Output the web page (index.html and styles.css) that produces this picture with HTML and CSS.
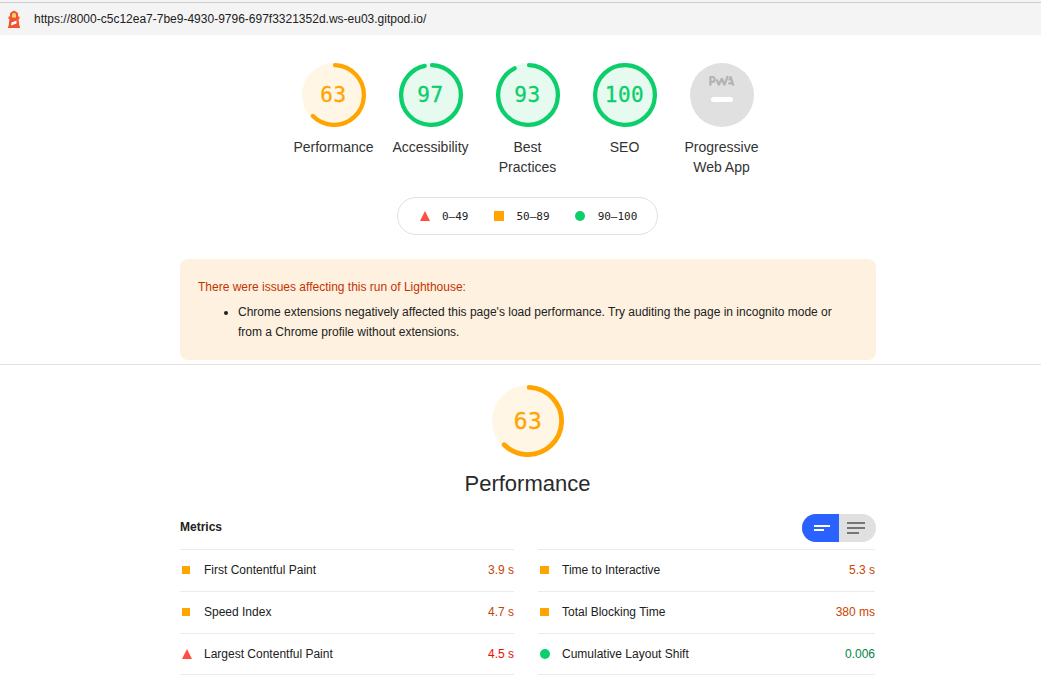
FILE: index.html
```html
<!DOCTYPE html>
<html lang="en">
<head>
<meta charset="utf-8">
<title>Lighthouse Report</title>
<link rel="stylesheet" href="styles.css">
</head>
<body>
<header class="topbar">
  <svg class="topbar-logo" width="14" height="19" viewBox="0 0 14 19">
    <path fill="#f4522d" d="M7 .5 11 3v3.500h1.500V9H11.500l1 7.500h.5V18H1v-1.500h.500l1-7.500H1.500V6.500H3V3z"/>
    <path fill="#ffd874" d="M5 7.500V5a2 2 0 0 1 4 0v2.500z"/>
    <path fill="#fff" d="m4.500 12.500 5-2v3L4 15.500z"/>
  </svg>
  <span class="topbar-url">https://8000-c5c12ea7-7be9-4930-9796-697f3321352d.ws-eu03.gitpod.io/</span>
</header>
<main>
  <section class="scores">
    <div class="gauge average">
      <div class="dial"><svg viewBox="0 0 120 120"><circle class="base" cx="60" cy="60" r="60"/><circle class="arc" cx="60" cy="60" r="56" stroke-dasharray="217.700 352"/></svg><span class="value">63</span></div>
      <div class="label">Performance</div>
    </div>
    <div class="gauge pass">
      <div class="dial"><svg viewBox="0 0 120 120"><circle class="base" cx="60" cy="60" r="60"/><circle class="arc" cx="60" cy="60" r="56" stroke-dasharray="337.300 352"/></svg><span class="value">97</span></div>
      <div class="label">Accessibility</div>
    </div>
    <div class="gauge pass">
      <div class="dial"><svg viewBox="0 0 120 120"><circle class="base" cx="60" cy="60" r="60"/><circle class="arc" cx="60" cy="60" r="56" stroke-dasharray="323.200 352"/></svg><span class="value">93</span></div>
      <div class="label">Best Practices</div>
    </div>
    <div class="gauge pass">
      <div class="dial"><svg viewBox="0 0 120 120"><circle class="base" cx="60" cy="60" r="60"/><circle class="arc" cx="60" cy="60" r="56" stroke-dasharray="352 352"/></svg><span class="value">100</span></div>
      <div class="label">SEO</div>
    </div>
    <div class="gauge">
      <div class="dial"><svg viewBox="0 0 64 64">
        <circle cx="32" cy="32" r="32" fill="#e0e0e0"/>
        <g fill="none" stroke="#b3b3b3" stroke-width="2.200" stroke-linejoin="bevel">
          <path d="M20.400 22.700V14h2q2.300 0 2.300 2.400T22.400 18.800H20.400"/>
          <path d="M26.700 16.500 28.800 22 31.800 15.500 34.400 22 37.800 13"/>
          <path d="M39.300 17.500 40.600 13.500 43.400 22.700M38.200 20.300h4"/>
        </g>
        <rect x="21" y="34" width="22" height="5" rx="2.500" fill="#fff"/>
      </svg></div>
      <div class="label">Progressive Web App</div>
    </div>
  </section>
  <div class="scale">
    <span class="range"><svg class="mark" viewBox="0 0 10 10"><path fill="#ff4e42" d="M5 0l5 10H0z"/></svg><span class="range-text">0–49</span></span>
    <span class="range"><svg class="mark" viewBox="0 0 10 10"><path fill="#ffa400" d="M0 0h10v10H0z"/></svg><span class="range-text">50–89</span></span>
    <span class="range"><svg class="mark" viewBox="0 0 10 10"><circle fill="#0cce6b" cx="5" cy="5" r="5"/></svg><span class="range-text">90–100</span></span>
  </div>
  <section class="warning">
    <p>There were issues affecting this run of Lighthouse:</p>
    <ul><li>Chrome extensions negatively affected this page's load performance. Try auditing the page in incognito mode or from a Chrome profile without extensions.</li></ul>
  </section>
  <section class="category">
    <div class="gauge gauge-large average">
      <div class="dial"><svg viewBox="0 0 120 120"><circle class="base" cx="60" cy="60" r="60"/><circle class="arc" cx="60" cy="60" r="56" stroke-dasharray="217.700 352"/></svg><span class="value">63</span></div>
      <h1>Performance</h1>
    </div>
    <div class="metrics-head">
      <h2>Metrics</h2>
      <div class="toggle">
        <span class="toggle-on"><svg width="37" height="28"><path fill="#fff" d="M12 11h16v2H12zM12 15h10v2H12z"/></svg></span>
        <span><svg width="37" height="28"><path fill="#757575" d="M8 8h18v2H8zM8 13h18v2H8zM8 18h12v2H8z"/></svg></span>
      </div>
    </div>
    <div class="metrics">
      <div class="column">
        <div class="metric average"><svg class="icon" viewBox="0 0 10 10"><path d="M0 1h8v8H0z"/></svg><span class="name">First Contentful Paint</span><span class="time">3.9 s</span></div>
        <div class="metric average"><svg class="icon" viewBox="0 0 10 10"><path d="M0 1h8v8H0z"/></svg><span class="name">Speed Index</span><span class="time">4.7 s</span></div>
        <div class="metric fail"><svg class="icon" viewBox="0 0 10 10"><path d="M5 0l5 10H0z"/></svg><span class="name">Largest Contentful Paint</span><span class="time">4.5 s</span></div>
      </div>
      <div class="column">
        <div class="metric average"><svg class="icon" viewBox="0 0 10 10"><path d="M0 1h9v8H0z"/></svg><span class="name">Time to Interactive</span><span class="time">5.3 s</span></div>
        <div class="metric average"><svg class="icon" viewBox="0 0 10 10"><path d="M0 1h9v8H0z"/></svg><span class="name">Total Blocking Time</span><span class="time">380 ms</span></div>
        <div class="metric pass"><svg class="icon" viewBox="0 0 10 10"><circle cx="5" cy="5" r="5"/></svg><span class="name">Cumulative Layout Shift</span><span class="time">0.006</span></div>
      </div>
    </div>
  </section>
</main>
</body>
</html>
```
FILE: styles.css
```css
* { box-sizing: border-box; }
body {
  margin: 0;
  overflow: hidden;
  background: #fff;
  color: #212121;
  font: 12px/20px "Liberation Sans", Arial, sans-serif;
}
svg { display: block; }
p, ul, h1, h2 { margin: 0; }

.topbar {
  display: flex;
  align-items: center;
  height: 35px;
  padding: 2px 0 0 7px;
  border-top: 1px solid #f4f4f4;
  background: linear-gradient(#f4f4f4 1px, #cecece 1px, #cecece 2px, #f4f4f4 2px);
}
.topbar-logo { margin-right: 13px; }

.scores {
  display: flex;
  justify-content: center;
  width: 485px;
  margin: 28px auto 0 285px;
}
.gauge {
  display: flex;
  flex-direction: column;
  align-items: center;
  width: 97px;
  --size: 64px;
}
.average { --color: #ffa400; --text: #c94400; }
.pass { --color: #0cce6b; --text: #018642; }
.fail { --color: #ff4e42; --text: #eb0f00; }
.dial {
  display: grid;
  place-items: center;
  width: var(--size);
  height: var(--size);
}
.dial > * { grid-area: 1 / 1; }
.dial svg { width: 100%; height: 100%; }
.base { fill: var(--color); fill-opacity: .1; }
.arc {
  fill: none;
  stroke: var(--color);
  stroke-width: 8;
  stroke-linecap: round;
  transform: rotate(-87.95deg);
  transform-origin: 60px 60px;
}
.value {
  color: var(--color);
  font: 21px/24px "DejaVu Sans Mono", monospace;
  letter-spacing: .5px;
  -webkit-text-stroke: .3px var(--color);
}
.label {
  width: 84px;
  margin-top: 10px;
  color: #333;
  font-size: 14px;
  text-align: center;
}

.scale {
  display: flex;
  align-items: center;
  width: 261px;
  height: 38px;
  margin: 20px 0 0 397px;
  padding-left: 22px;
  gap: 25px;
  border: 1px solid #e0e0e0;
  border-radius: 19px;
  font: 11px/16px "DejaVu Sans Mono", monospace;
}
.range { display: flex; align-items: center; }
.range-text { padding-top: 2px; }
.range:nth-child(n+2) .mark { margin-right: 13px; }
.mark { width: 10px; height: 10px; margin-right: 12px; }

.warning {
  width: 696px;
  height: 101px;
  margin: 24px 0 4px 180px;
  padding: 18px 40px 0 18px;
  border-radius: 8px;
  background: #fff1e0;
}
.warning p { color: #c33300; }
.warning ul { margin-top: 5px; padding-left: 40px; }

.category { padding: 20px 165px 0 180px; border-top: 1px solid #e0e0e0; }
.gauge-large { --size: 72px; width: 695px; }
.gauge-large .dial { width: 72px; margin-left: 1px; }
.gauge-large .value { font-size: 23px; line-height: 28px; }
.gauge-large h1 {
  margin-top: 13px;
  color: #2a2a2a;
  font-size: 22px;
  font-weight: 400;
  line-height: 28px;
}
.metrics-head {
  display: flex;
  align-items: center;
  justify-content: space-between;
  height: 28px;
  margin: 16px 0 7px;
}
h2 { font-size: 12px; line-height: 20px; padding-bottom: 2px; }
.toggle {
  display: flex;
  overflow: hidden;
  border-radius: 14px;
  background: #e0e0e0;
}
.toggle-on { background: #2962ff; }

.metrics { display: grid; grid-template-columns: 334px 337px; gap: 24px; }
.metric {
  display: flex;
  align-items: center;
  height: 42px;
  padding-bottom: 1px;
  border-top: 1px solid #ebebeb;
}
.metric:last-child { padding-bottom: 0; border-bottom: 1px solid #ebebeb; }
.icon { width: 10px; height: 10px; margin: 0 12px 0 2px; fill: var(--color); }
.name { flex: 1; }
.time { color: var(--text); }
```
